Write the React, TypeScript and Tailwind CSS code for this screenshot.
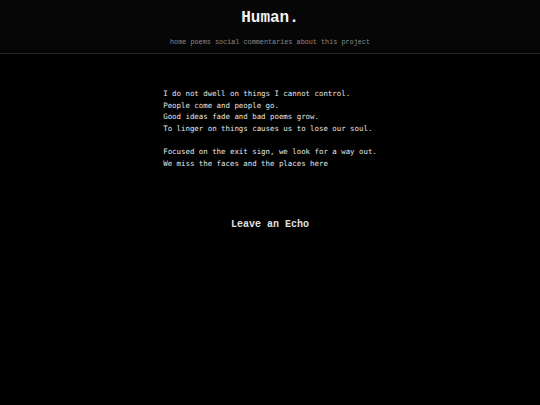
const poem = [
  "I do not dwell on things I cannot control.",
  "People come and people go.",
  "Good ideas fade and bad poems grow.",
  "To linger on things causes us to lose our soul.",
  "",
  "Focused on the exit sign, we look for a way out.",
  "We miss the faces and the places here",
];

const links = ["home", "poems", "social commentaries", "about this project"];

export default function App() {
  return (
    <div className="min-h-[405px] bg-black text-[#e5e5e5] antialiased">
      <header className="border-b border-[#222] bg-[#060606] pt-[9px] pb-[6px] text-center font-['Liberation_Mono','Courier_New',monospace]">
        <h1 className="text-[16px] font-bold leading-[18px] text-[#f2f2f2]">Human.</h1>
        <nav className="mt-[10px] whitespace-pre text-[6.8px] leading-[10px] text-[#8a8a8a]">
          {links.map((l, i) => (
            <span key={l}>
              {i > 0 && " "}
              <a href="#">{l}</a>
            </span>
          ))}
        </nav>
      </header>

      <main className="flex flex-col items-center pt-[34px]">
        <div className="whitespace-pre font-['DejaVu_Sans_Mono',monospace] text-[7.4px] leading-[11.7px] text-[#e6e6e6]">
          {poem.map((line, i) => (
            <div key={i} className="h-[11.7px]">
              {line}
            </div>
          ))}
        </div>
        <h2 className="mt-[47px] font-['Liberation_Mono','Courier_New',monospace] text-[10px] font-bold text-[#e0e0e0]">
          Leave an Echo
        </h2>
      </main>
    </div>
  );
}
